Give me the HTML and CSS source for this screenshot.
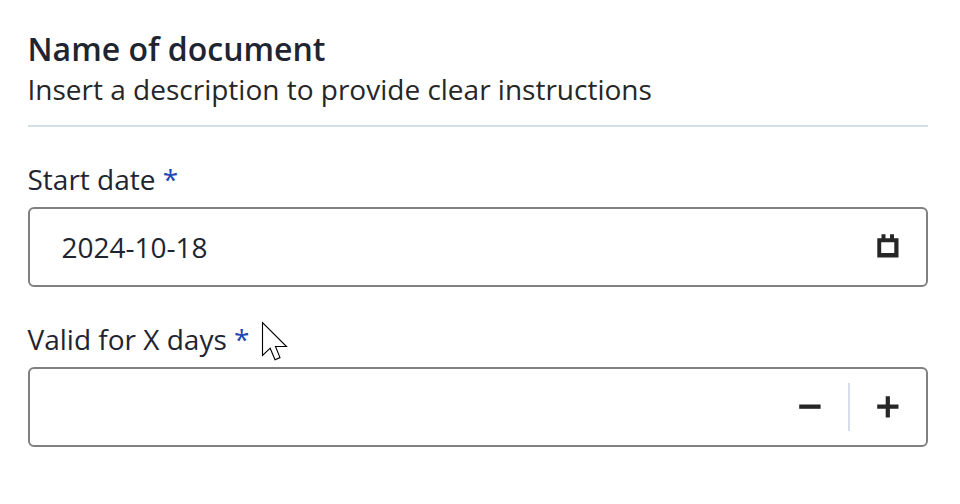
FILE: index.html
```html
<!DOCTYPE html>
<html lang="en">
<head>
    <meta charset="UTF-8">
    <meta name="viewport" content="width=device-width, initial-scale=1.0">
    <title>Name of document</title>
    <link rel="stylesheet" href="styles.css">
</head>
<body>
<form class="form">
    <div class="header">
        <h1 class="title">Name of document</h1>
        <p class="description">Insert a description to provide clear instructions</p>
    </div>

    <div class="group">
        <label class="label" for="startDate">Start date <span class="required">*</span></label>
        <div class="field">
            <input class="input" type="text" id="startDate" value="2024-10-18">
            <button class="icon-button" type="button" aria-label="Open calendar">
                <svg width="24" height="26" viewBox="0 0 24 26">
                    <path fill="#262626" fill-rule="evenodd" d="M1.300 4.300H5.500V.3H9.500V4.300H14V.3H18V4.300H22.500V23.400H1.300ZM5.200 8.300V19H18.300V8.300Z"/>
                </svg>
            </button>
        </div>
    </div>

    <div class="group">
        <label class="label" for="validDays">Valid for X days <span class="required">*</span></label>
        <div class="field">
            <input class="input" type="text" id="validDays">
            <button class="icon-button" type="button" aria-label="Decrease">
                <svg width="24" height="24" viewBox="0 0 24 24">
                    <path fill="#262626" d="M1.200 9.500H22.600V13.800H1.200Z"/>
                </svg>
            </button>
            <span class="divider"></span>
            <button class="icon-button" type="button" aria-label="Increase">
                <svg width="24" height="24" viewBox="0 0 24 24">
                    <path fill="#262626" d="M9.700 1.200H13.900V9.500H22.500V13.800H13.900V22.400H9.700V13.800H1.200V9.500H9.700Z"/>
                </svg>
            </button>
        </div>
    </div>
</form>

<!-- Mouse pointer -->
<svg class="cursor" width="28" height="40" viewBox="0 0 28 40">
    <path fill="#fff" stroke="#000" stroke-width="1.1" d="M1.500 1.500V34.500L9.200 27.200L14 38.800L19 36.600L14.500 25.500H25.500Z"/>
</svg>
</body>
</html>
```
FILE: styles.css
```css
body {
    margin: 0;
    background-color: #fff;
    color: #1e2530;
    font-family: "Open Sans", sans-serif;
    font-size: 28px;
}

.form {
    padding: 28px 32px 0 28px;
}

.header {
    height: 97px;
    border-bottom: 2px solid #d3deea;
}

.title {
    margin: 0;
    font-size: 32px;
    font-weight: 600;
    line-height: 42px;
    text-indent: -0.5px;
}

.description {
    margin: 0;
    color: #262626;
    line-height: 38px;
    text-indent: -0.5px;
}

.group {
    padding-top: 33px;
}

.label {
    display: block;
    height: 47px;
    line-height: 38px;
    text-indent: -0.5px;
}

.required {
    color: #1e46b4;
}

.field {
    display: flex;
    align-items: center;
    box-sizing: border-box;
    height: 80px;
    border: 2px solid #808080;
    border-radius: 6px;
}

.input {
    flex: 1;
    min-width: 0;
    padding: 0 32px 0 31.5px;
    border: none;
    outline: none;
    background: none;
    color: inherit;
    font: inherit;
}

.icon-button {
    display: flex;
    align-items: center;
    justify-content: center;
    width: 76px;
    height: 76px;
    padding: 0;
    border: none;
    background: none;
    cursor: pointer;
}

.divider {
    width: 2px;
    height: 48px;
    background-color: #d3deea;
}

.cursor {
    position: absolute;
    left: 261px;
    top: 321px;
}
```
